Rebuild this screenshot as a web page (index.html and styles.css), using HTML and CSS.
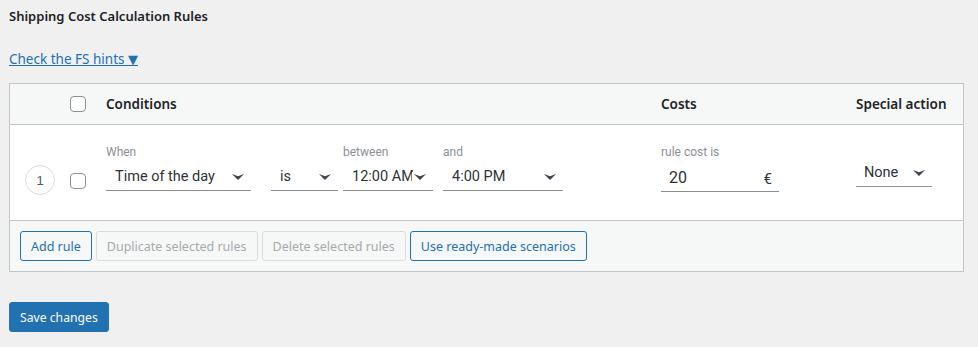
FILE: index.html
```html
<!DOCTYPE html>
<html lang="en">
<head>
    <meta charset="UTF-8">
    <title>Shipping Cost Calculation Rules</title>
    <link rel="stylesheet" href="styles.css">
</head>
<body>
    <!-- Section title -->
    <h2 class="section-title">Shipping Cost Calculation Rules</h2>

    <p class="hints"><a href="#" class="hints-link">Check the FS hints <span class="hints-arrow">▼</span></a></p>

    <!-- Rules table -->
    <div class="rules">
        <div class="rules-head">
            <div class="cell cell-num"></div>
            <div class="cell cell-check"><span class="checkbox"></span></div>
            <div class="cell cell-cond">Conditions</div>
            <div class="cell cell-cost">Costs</div>
            <div class="cell cell-action">Special action</div>
        </div>

        <div class="rules-row">
            <div class="cell cell-num"><span class="row-num">1</span></div>
            <div class="cell cell-check"><span class="checkbox"></span></div>
            <div class="cell cell-cond">
                <div class="field field-when">
                    <label>When</label>
                    <div class="select">Time of the day<svg class="caret" viewBox="0 0 12 6"><path d="M0 0 L6 2.2 L12 0 L6 6 Z"/></svg></div>
                </div>
                <div class="field field-is">
                    <label>&nbsp;</label>
                    <div class="select">is<svg class="caret" viewBox="0 0 12 6"><path d="M0 0 L6 2.2 L12 0 L6 6 Z"/></svg></div>
                </div>
                <div class="field field-from">
                    <label>between</label>
                    <div class="select">12:00 AM<svg class="caret" viewBox="0 0 12 6"><path d="M0 0 L6 2.2 L12 0 L6 6 Z"/></svg></div>
                </div>
                <div class="field field-to">
                    <label>and</label>
                    <div class="select">4:00 PM<svg class="caret" viewBox="0 0 12 6"><path d="M0 0 L6 2.2 L12 0 L6 6 Z"/></svg></div>
                </div>
            </div>
            <div class="cell cell-cost">
                <div class="field field-cost">
                    <label>rule cost is</label>
                    <div class="input"><span>20</span><span class="currency">€</span></div>
                </div>
            </div>
            <div class="cell cell-action">
                <div class="select select-action">None<svg class="caret" viewBox="0 0 12 6"><path d="M0 0 L6 2.2 L12 0 L6 6 Z"/></svg></div>
            </div>
        </div>

        <div class="rules-foot">
            <button class="btn">Add rule</button>
            <button class="btn" disabled>Duplicate selected rules</button>
            <button class="btn" disabled>Delete selected rules</button>
            <button class="btn">Use ready-made scenarios</button>
        </div>
    </div>

    <button class="btn-primary">Save changes</button>
</body>
</html>
```

FILE: styles.css
```css
/* Base */
body {
    margin: 0;
    padding: 0 14px 0 9px;
    background: #f0f0f1;
    color: #1d2327;
    font-family: "Noto Sans", "Open Sans", sans-serif;
    font-size: 13px;
}

.section-title {
    margin: 0;
    padding-top: 6px;
    font-size: 13px;
    font-weight: 600;
    line-height: 20px;
}

.hints {
    margin: 23px 0 0;
    line-height: 20px;
    font-size: 13.5px;
}

.hints-link {
    color: #2271b1;
}

.hints-arrow {
    font-family: "DejaVu Sans", sans-serif;
    font-size: 13px;
}

/* Rules table */
.rules {
    margin-top: 13px;
    border: 1px solid #c3c4c7;
    background: #fff;
}

.rules-head,
.rules-row {
    display: grid;
    grid-template-columns: 50px 36px 1fr 195px 117px;
}

.rules-head {
    height: 40px;
    align-items: center;
    background: #f6f7f7;
    border-bottom: 1px solid #c3c4c7;
    font-size: 13.5px;
    font-weight: 600;
}

.rules-row {
    height: 95px;
    align-items: start;
    border-bottom: 1px solid #c3c4c7;
}

.cell {
    padding: 0 10px;
}

.cell-num {
    padding: 0 0 0 15px;
}

.cell-check {
    padding: 0 0 0 10px;
}

.rules-row .cell-num { padding-top: 40px; }
.rules-row .cell-check { padding-top: 48px; }
.rules-row .cell-cond,
.rules-row .cell-cost { padding-top: 20px; }
.rules-row .cell-action { padding-top: 34px; }

.checkbox {
    display: block;
    width: 14px;
    height: 14px;
    border: 1px solid #8c8f94;
    border-radius: 4px;
    background: #fff;
}

.row-num {
    display: flex;
    align-items: center;
    justify-content: center;
    width: 28px;
    height: 28px;
    border: 1px solid #dcdcde;
    border-radius: 50%;
    color: #50575e;
    font-family: "Liberation Sans", Arial, sans-serif;
    font-size: 13px;
}

/* Fields */
.cell-cond {
    display: flex;
    align-items: flex-start;
}

.field label {
    display: block;
    height: 14px;
    margin-bottom: 4px;
    color: #8c8f94;
    font-family: Roboto, "Liberation Sans", sans-serif;
    font-size: 12px;
    line-height: 14px;
}

.field-when { width: 145px; margin-right: 20px; }
.field-is { width: 67px; margin-right: 5px; }
.field-from { width: 90px; margin-right: 10px; }
.field-to { width: 120px; }
.field-cost { width: 118px; }

.select,
.input {
    position: relative;
    display: flex;
    align-items: center;
    height: 27px;
    padding: 0 0 0 9px;
    border-bottom: 1px solid #8c8f94;
    color: #2c3338;
    font-family: Roboto, "Liberation Sans", sans-serif;
    font-size: 14.5px;
    white-space: nowrap;
    overflow: hidden;
}

.caret {
    position: absolute;
    right: 7px;
    top: 11px;
    width: 12px;
    height: 6px;
    fill: #3c434a;
    background: #fff;
    box-shadow: 0 0 0 2px #fff;
}

.input {
    justify-content: space-between;
    padding: 0 7px 0 8px;
    height: 28px;
    font-size: 16px;
}

.currency {
    margin-top: 4px;
    font-size: 15px;
}

.select-action {
    width: 68px;
    padding-left: 8px;
}

/* Footer buttons */
.rules-foot {
    display: flex;
    gap: 4px;
    padding: 10px;
    background: #f6f7f7;
}

.btn {
    height: 30px;
    padding: 0 10px;
    border: 1px solid #2271b1;
    border-radius: 3px;
    background: #f6f7f7;
    color: #2271b1;
    font-family: "Noto Sans", "Open Sans", sans-serif;
    font-size: 12.5px;
    cursor: pointer;
}

.btn:disabled {
    border-color: #dcdcde;
    color: #a7aaad;
    cursor: default;
}

.btn-primary {
    margin-top: 30px;
    height: 30px;
    padding: 0 10px;
    border: 1px solid #2271b1;
    border-radius: 3px;
    background: #2271b1;
    color: #fff;
    font-family: "Noto Sans", "Open Sans", sans-serif;
    font-size: 12.2px;
}
```
